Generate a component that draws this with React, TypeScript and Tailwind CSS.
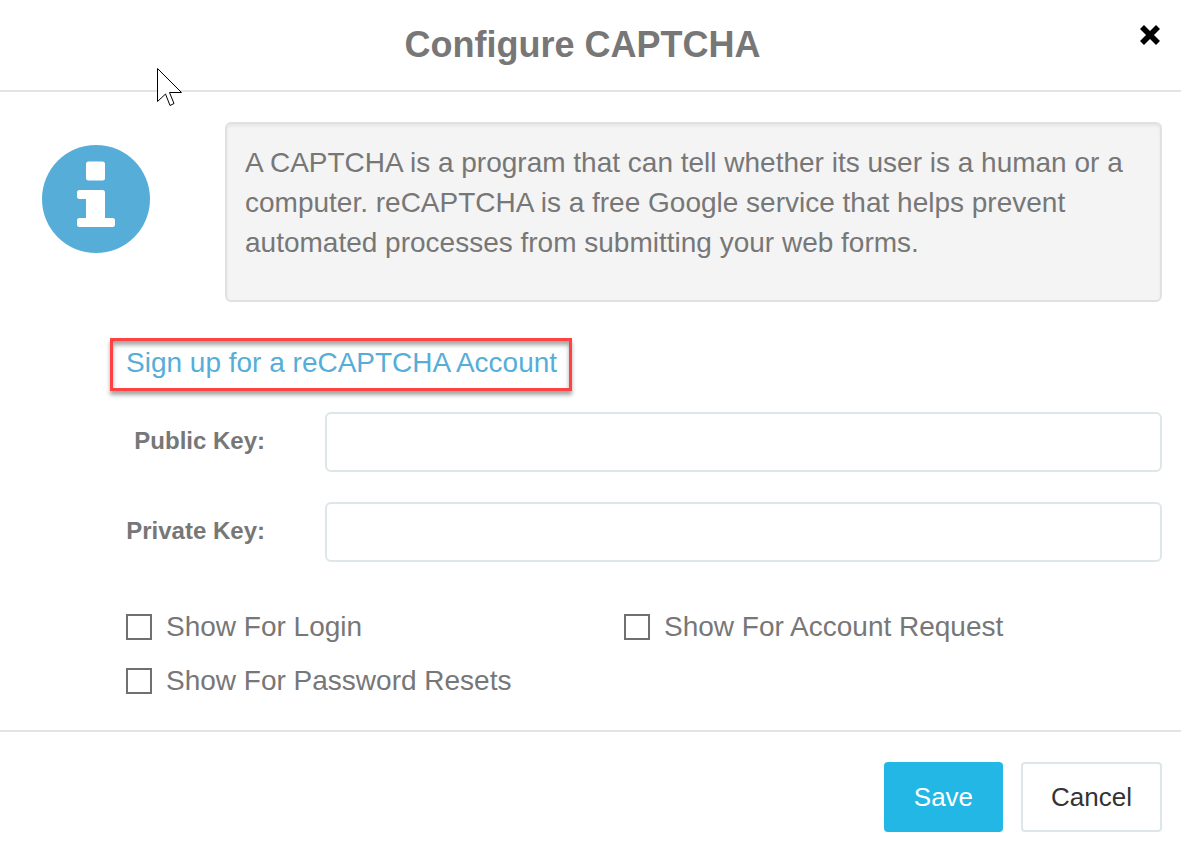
import { useState } from 'react'

export default function App() {
    return (
        <div className="relative min-h-screen bg-white font-['Liberation_Sans',Arial,sans-serif] text-[28px] leading-10 text-[#777]">
            <header className="relative flex h-[92px] items-center justify-center border-b-2 border-[#e3e3e3] pr-16 pl-12">
                <h1 className="text-[36px] leading-10 font-bold">Configure CAPTCHA</h1>
                <button type="button" aria-label="Close" className="absolute top-6 right-5">
                    <CloseIcon />
                </button>
            </header>

            <main className="pr-[19px] pb-[29px]">
                <div className="flex pt-[30px]">
                    <div className="w-[225px] shrink-0 pt-[23px] pl-[42px]">
                        <InfoIcon />
                    </div>
                    <p className="min-h-[180px] flex-1 rounded-md border-2 border-[#e1e1e1] bg-[#f4f4f4] px-[18px] pt-[19px] shadow-[inset_0_2px_3px_rgba(0,0,0,0.06)]">
                        A CAPTCHA is a program that can tell whether its user is a human or a computer. reCAPTCHA is a free Google
                        service that helps prevent automated processes from submitting your web forms.
                    </p>
                </div>

                <a
                    href="#signup"
                    className="mt-9 ml-[110px] block h-[53px] w-fit border-3 border-[#ff4343] pr-3 pl-[13px] leading-[44px] text-[#56aed8] shadow-[0_4px_4px_rgba(0,0,0,0.35),inset_0_4px_4px_rgba(0,0,0,0.35)]"
                >
                    Sign up for a reCAPTCHA Account
                </a>

                <div className="mt-[21px] flex flex-col gap-[30px]">
                    <KeyField id="public-key" label="Public Key:" />
                    <KeyField id="private-key" label="Private Key:" />
                </div>

                <div className="mt-[45px] ml-[126px] grid grid-cols-[498px_1fr] gap-y-[14px]">
                    <CheckOption label="Show For Login" />
                    <CheckOption label="Show For Account Request" />
                    <CheckOption label="Show For Password Resets" />
                </div>
            </main>

            <footer className="flex justify-end gap-[18px] border-t-2 border-[#e3e3e3] pt-[30px] pr-[19px] text-[26px]">
                <button type="button" className="h-[70px] rounded bg-[#23b7e5] px-[30px] text-white">
                    Save
                </button>
                <button type="button" className="h-[70px] rounded border-2 border-[#dde6e9] bg-white px-7 text-[#333]">
                    Cancel
                </button>
            </footer>

            <Pointer />
        </div>
    )
}

function KeyField({ id, label }: { id: string; label: string }) {
    const [value, setValue] = useState('')

    return (
        <div className="flex">
            <label htmlFor={id} className="w-[265px] shrink-0 pt-[9px] text-right text-[24px] font-bold">
                {label}
            </label>
            <input
                id={id}
                type="text"
                value={value}
                onChange={(e) => setValue(e.target.value)}
                className="ml-[60px] h-[60px] min-w-0 flex-1 rounded-md border-2 border-[#dde6e9] bg-white px-4"
            />
        </div>
    )
}

function CheckOption({ label }: { label: string }) {
    return (
        <label className="flex items-center gap-[14px]">
            <input type="checkbox" className="size-[26px] appearance-none border-2 border-[#707070] bg-white checked:bg-[#707070]" />
            {label}
        </label>
    )
}

function InfoIcon() {
    return (
        <svg className="size-[108px]" viewBox="0 0 108 108" aria-hidden="true">
            <circle cx="54" cy="54" r="54" fill="#56aed8" />
            <g fill="#fff">
                <rect x="44" y="16.5" width="19" height="19" rx="2.5" />
                <path d="M37.5 45H60.5A2.5 2.5 0 0 1 63 47.5V73H70.5A2.5 2.5 0 0 1 73 75.5V79.5A2.5 2.5 0 0 1 70.5 82H37.5A2.5 2.5 0 0 1 35 79.5V75.5A2.5 2.5 0 0 1 37.5 73H44V54H37.5A2.5 2.5 0 0 1 35 51.5V47.5A2.5 2.5 0 0 1 37.5 45Z" />
            </g>
        </svg>
    )
}

function CloseIcon() {
    return (
        <svg className="size-[22px]" viewBox="0 0 22 22" fill="none" stroke="#000" strokeWidth="5.6" aria-hidden="true">
            <path d="M3 3L19 19M19 3L3 19" />
        </svg>
    )
}

function Pointer() {
    return (
        <svg className="pointer-events-none absolute top-[67px] left-[156px] h-[40px] w-[28px]" viewBox="0 0 28 40" aria-hidden="true">
            <path d="M1.5 1.5V34.5L9.5 27L14 38.5L18 36.5L13.5 25.5H25.5Z" fill="#fff" stroke="#000" strokeWidth="1" />
        </svg>
    )
}
